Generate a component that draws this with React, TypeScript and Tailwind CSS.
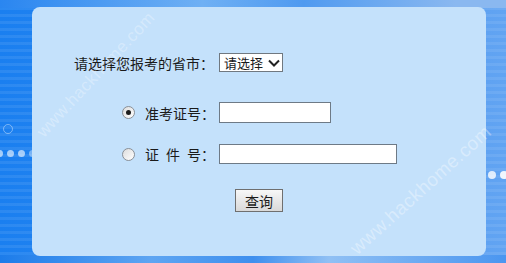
import React from "react";

const cjk = { fontFamily: '"Microsoft YaHei", "Noto Sans CJK SC", "Noto Sans", sans-serif' };

function Radio({ checked }: { checked?: boolean }) {
  return (
    <span className="inline-flex h-[13px] w-[13px] items-center justify-center rounded-full border border-[#8a8f96] bg-gradient-to-br from-[#dcdcdc] to-white">
      {checked && <span className="h-[5px] w-[5px] rounded-full bg-[#1c1c1c]" />}
    </span>
  );
}

export default function App() {
  return (
    <div
      className="relative h-[263px] w-[506px] overflow-hidden bg-[linear-gradient(to_right,#1a7ff0_0%,#2c88f0_35%,#4a96f0_70%,#62a4f2_100%)]"
      style={cjk}
    >
      {/* stripes */}
      <div className="pointer-events-none absolute inset-0 bg-[repeating-linear-gradient(to_bottom,rgba(255,255,255,0.08)_0px,rgba(255,255,255,0.08)_3px,transparent_3px,transparent_7px)]" />
      <div className="pointer-events-none absolute inset-x-0 top-0 h-[8px] bg-[linear-gradient(to_right,#2a86f0,#6fb0f4_40%,#4f9af0_60%,#8ab8f0_90%)]" />
      <div className="pointer-events-none absolute inset-x-0 bottom-0 h-[8px] bg-[linear-gradient(to_right,#1c7cea,#5ea5f2_30%,#3e8fee_50%,#90c0f4_65%,#4a96f0_100%)]" />

      {/* decorative dots */}
      <div className="absolute left-[-4px] top-[150px] flex gap-[4px]">
        <span className="h-[7px] w-[7px] rounded-full bg-white/60" />
        <span className="h-[7px] w-[7px] rounded-full bg-white/60" />
        <span className="h-[7px] w-[7px] rounded-full bg-white/60" />
        <span className="h-[7px] w-[7px] rounded-full bg-white/40" />
      </div>
      <span className="absolute left-[3px] top-[124px] h-[10px] w-[10px] rounded-full border border-white/40" />
      <div className="absolute left-[488px] top-[171px] flex gap-[4px]">
        <span className="h-[8px] w-[8px] rounded-full bg-white/80" />
        <span className="h-[8px] w-[8px] rounded-full bg-white/90" />
      </div>

      <div className="relative z-10 flex pl-[32px] pt-[7px]">
        <div className="flex h-[249px] w-[454px] shrink-0 flex-col rounded-[8px] bg-[#c4e1fb] pt-[46px] text-[14px] leading-none text-[#1a1a1a]">
          {/* row 1 */}
          <div className="flex h-[19px] items-center">
            <span className="ml-[42px] w-[142px] shrink-0">请选择您报考的省市：</span>
            <div className="relative ml-[3px] flex h-[19px] w-[64px] shrink-0 items-center border border-[#707880] bg-white">
              <span className="pl-[4px] text-[13px]">请选择</span>
              <svg className="absolute right-[2px] top-[5px]" width="12" height="8" viewBox="0 0 12 8">
                <path d="M1 1.5 L6 6.5 L11 1.5" fill="none" stroke="#222" strokeWidth="2" />
              </svg>
            </div>
          </div>

          {/* row 2 */}
          <div className="mt-[30px] flex h-[21px] items-center">
            <span className="ml-[90px] flex w-[13px] shrink-0">
              <Radio checked />
            </span>
            <span className="ml-[10px] w-[71px] shrink-0">准考证号：</span>
            <div className="ml-[3px] h-[21px] w-[112px] shrink-0 border border-[#6e7a86] bg-white" />
          </div>

          {/* row 3 */}
          <div className="mt-[21px] flex h-[20px] items-center">
            <span className="ml-[90px] flex w-[13px] shrink-0">
              <Radio />
            </span>
            <span className="ml-[10px] flex w-[71px] shrink-0 justify-between pr-[1px]">
              <span>证</span>
              <span>件</span>
              <span>号：</span>
            </span>
            <div className="ml-[3px] h-[20px] w-[178px] shrink-0 border border-[#6e7a86] bg-white" />
          </div>

          {/* button */}
          <div className="mt-[25px] flex justify-center">
            <button className="flex h-[23px] w-[48px] items-center justify-center border border-[#6f6f6f] bg-gradient-to-b from-[#f7f7f7] to-[#d9d9d9] text-[14px] text-[#1a1a1a]">
              查询
            </button>
          </div>
        </div>
      </div>

      {/* watermarks */}
      <span
        className="pointer-events-none absolute left-[14px] top-[62px] z-20 -rotate-[47deg] text-[17px] tracking-[0.5px] text-white/30"
        style={{ fontFamily: '"Liberation Sans", Arial, sans-serif' }}
      >
        www.hackhome.com
      </span>
      <span
        className="pointer-events-none absolute left-[330px] top-[176px] z-20 -rotate-[42deg] text-[19px] tracking-[0.5px] text-white/35"
        style={{ fontFamily: '"Liberation Sans", Arial, sans-serif' }}
      >
        www.hackhome.com
      </span>
    </div>
  );
}
